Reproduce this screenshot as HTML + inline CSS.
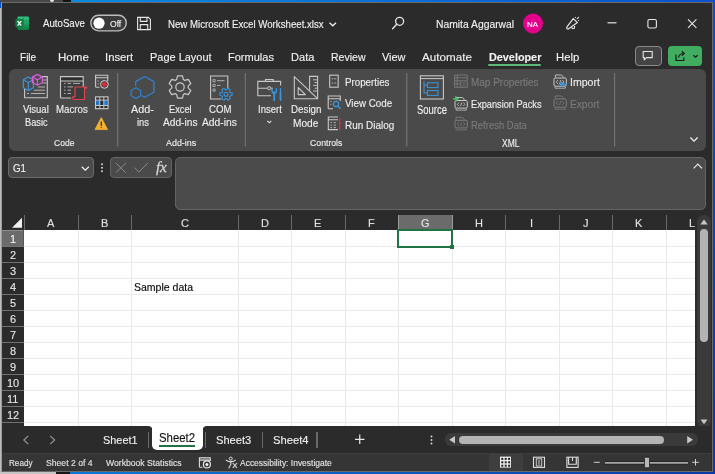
<!DOCTYPE html><html><head><meta charset="utf-8"><style>
html,body{margin:0;padding:0;width:715px;height:474px;overflow:hidden;background:#0a6fd6}
#w{position:relative;width:715px;height:474px;overflow:hidden;font-family:"Liberation Sans",sans-serif}
.t{position:absolute;white-space:nowrap;line-height:1;will-change:transform}
.b{position:absolute;box-sizing:border-box}
svg{position:absolute;overflow:visible}
</style></head><body><div id="w">
<div class="b" style="left:0px;top:0px;width:715px;height:474px;background:linear-gradient(to bottom,#0a50cc,#0a3aa6);"></div>
<div class="b" style="left:0px;top:0px;width:715px;height:2px;background:linear-gradient(to right,#0b8ae0 10%,#0a52cc);"></div>
<div class="b" style="left:0px;top:472px;width:715px;height:2px;background:linear-gradient(to right,#0a78d8 10%,#0a3aa6);"></div>
<div class="b" style="left:0px;top:0px;width:63px;height:2px;background:#474747;"></div>
<div class="b" style="left:63px;top:0px;width:8px;height:2px;background:#141414;"></div>
<div class="b" style="left:50px;top:0px;width:3.5px;height:1.6px;background:#e8e8e8;border-radius:0 0 2px 2px"></div>
<div class="b" style="left:0px;top:8px;width:1px;height:466px;background:#bcbcbc;"></div>
<div class="b" style="left:0px;top:472px;width:56px;height:2px;background:#c4c4c4;"></div>
<div class="b" style="left:56px;top:472px;width:14px;height:2px;background:#161616;"></div>
<div class="b" style="left:1px;top:2px;width:712px;height:470px;background:#2b2b2b;border:1px solid #6a6a6a;border-left-color:#9c9c9c"></div>
<div class="b" style="left:9px;top:69px;width:697px;height:82px;background:#4a4a4a;border-radius:6px"></div>
<div class="b" style="left:488px;top:64px;width:53px;height:2px;background:#5cb97a;border-radius:1px"></div>
<div class="b" style="left:635px;top:46px;width:27px;height:20px;background:#444444;border:1px solid #8a8a8a;border-radius:4px"></div>
<div class="b" style="left:668px;top:46px;width:34px;height:20px;background:#40ad60;border-radius:4px"></div>
<div class="b" style="left:8px;top:157px;width:86px;height:21px;background:#4a4a4a;border:1px solid #6b6b6b;border-radius:4px"></div>
<div class="b" style="left:110px;top:157px;width:62px;height:21px;background:#4a4a4a;border:1px solid #646464;border-radius:4px"></div>
<div class="b" style="left:175px;top:157px;width:531px;height:53px;background:#4b4b4b;border:1px solid #646464;border-radius:5px"></div>
<div class="b" style="left:24px;top:230px;width:671px;height:196px;background:#ffffff;"></div>
<div class="b" style="left:78px;top:230px;width:1px;height:196px;background:#e9e9e9;"></div>
<div class="b" style="left:131px;top:230px;width:1px;height:196px;background:#e9e9e9;"></div>
<div class="b" style="left:238px;top:230px;width:1px;height:196px;background:#e9e9e9;"></div>
<div class="b" style="left:291px;top:230px;width:1px;height:196px;background:#e9e9e9;"></div>
<div class="b" style="left:345px;top:230px;width:1px;height:196px;background:#e9e9e9;"></div>
<div class="b" style="left:398px;top:230px;width:1px;height:196px;background:#e9e9e9;"></div>
<div class="b" style="left:452px;top:230px;width:1px;height:196px;background:#e9e9e9;"></div>
<div class="b" style="left:505px;top:230px;width:1px;height:196px;background:#e9e9e9;"></div>
<div class="b" style="left:559px;top:230px;width:1px;height:196px;background:#e9e9e9;"></div>
<div class="b" style="left:612px;top:230px;width:1px;height:196px;background:#e9e9e9;"></div>
<div class="b" style="left:666px;top:230px;width:1px;height:196px;background:#e9e9e9;"></div>
<div class="b" style="left:24px;top:246px;width:671px;height:1px;background:#e9e9e9;"></div>
<div class="b" style="left:24px;top:262px;width:671px;height:1px;background:#e9e9e9;"></div>
<div class="b" style="left:24px;top:278px;width:671px;height:1px;background:#e9e9e9;"></div>
<div class="b" style="left:24px;top:294px;width:671px;height:1px;background:#e9e9e9;"></div>
<div class="b" style="left:24px;top:310px;width:671px;height:1px;background:#e9e9e9;"></div>
<div class="b" style="left:24px;top:326px;width:671px;height:1px;background:#e9e9e9;"></div>
<div class="b" style="left:24px;top:342px;width:671px;height:1px;background:#e9e9e9;"></div>
<div class="b" style="left:24px;top:358px;width:671px;height:1px;background:#e9e9e9;"></div>
<div class="b" style="left:24px;top:374px;width:671px;height:1px;background:#e9e9e9;"></div>
<div class="b" style="left:24px;top:390px;width:671px;height:1px;background:#e9e9e9;"></div>
<div class="b" style="left:24px;top:406px;width:671px;height:1px;background:#e9e9e9;"></div>
<div class="b" style="left:24px;top:422px;width:671px;height:1px;background:#e9e9e9;"></div>
<div class="b" style="left:398px;top:215px;width:54px;height:15px;background:#6b6b6b;"></div>
<div class="b" style="left:24px;top:215px;width:1px;height:15px;background:#6a6a6a;"></div>
<div class="b" style="left:78px;top:215px;width:1px;height:15px;background:#6a6a6a;"></div>
<div class="b" style="left:131px;top:215px;width:1px;height:15px;background:#6a6a6a;"></div>
<div class="b" style="left:238px;top:215px;width:1px;height:15px;background:#6a6a6a;"></div>
<div class="b" style="left:291px;top:215px;width:1px;height:15px;background:#6a6a6a;"></div>
<div class="b" style="left:345px;top:215px;width:1px;height:15px;background:#6a6a6a;"></div>
<div class="b" style="left:398px;top:215px;width:1px;height:15px;background:#9a9a9a;"></div>
<div class="b" style="left:452px;top:215px;width:1px;height:15px;background:#9a9a9a;"></div>
<div class="b" style="left:505px;top:215px;width:1px;height:15px;background:#6a6a6a;"></div>
<div class="b" style="left:559px;top:215px;width:1px;height:15px;background:#6a6a6a;"></div>
<div class="b" style="left:612px;top:215px;width:1px;height:15px;background:#6a6a6a;"></div>
<div class="b" style="left:666px;top:215px;width:1px;height:15px;background:#6a6a6a;"></div>
<div class="b" style="left:2px;top:246px;width:22px;height:1.3px;background:#707070;"></div>
<div class="b" style="left:2px;top:262px;width:22px;height:1.3px;background:#707070;"></div>
<div class="b" style="left:2px;top:278px;width:22px;height:1.3px;background:#707070;"></div>
<div class="b" style="left:2px;top:294px;width:22px;height:1.3px;background:#707070;"></div>
<div class="b" style="left:2px;top:310px;width:22px;height:1.3px;background:#707070;"></div>
<div class="b" style="left:2px;top:326px;width:22px;height:1.3px;background:#707070;"></div>
<div class="b" style="left:2px;top:342px;width:22px;height:1.3px;background:#707070;"></div>
<div class="b" style="left:2px;top:358px;width:22px;height:1.3px;background:#707070;"></div>
<div class="b" style="left:2px;top:374px;width:22px;height:1.3px;background:#707070;"></div>
<div class="b" style="left:2px;top:390px;width:22px;height:1.3px;background:#707070;"></div>
<div class="b" style="left:2px;top:406px;width:22px;height:1.3px;background:#707070;"></div>
<div class="b" style="left:2px;top:422px;width:22px;height:1.3px;background:#707070;"></div>
<div class="b" style="left:2px;top:230px;width:21px;height:16px;background:#6b6b6b;"></div>
<div class="b" style="left:2px;top:230px;width:22px;height:1px;background:#8c8c8c;"></div>
<div class="b" style="left:23px;top:230px;width:1px;height:16px;background:#217346;"></div>
<div class="b" style="left:397px;top:229px;width:56px;height:19px;background:transparent;border:2px solid #217346"></div>
<div class="b" style="left:450px;top:245px;width:4px;height:4px;background:#217346;"></div>
<div class="b" style="left:697px;top:215px;width:14px;height:213px;background:#3a3a3a;border-radius:7px"></div>
<div class="b" style="left:700px;top:229px;width:8px;height:113px;background:#b4b4b4;border-radius:4px"></div>
<div class="b" style="left:140px;top:426px;width:72px;height:6px;background:#ffffff;"></div>
<div class="b" style="left:2px;top:426px;width:151px;height:27px;background:#2b2b2b;border-radius:0 5px 0 0"></div>
<div class="b" style="left:202px;top:426px;width:509px;height:27px;background:#2b2b2b;border-radius:5px 0 0 0"></div>
<div class="b" style="left:2px;top:448px;width:709px;height:5px;background:#2b2b2b;"></div>
<div class="b" style="left:2px;top:453px;width:709px;height:18px;background:#353535;border-top:1px solid #3c3c3c"></div>
<div class="b" style="left:152px;top:426px;width:51px;height:24px;background:#ffffff;border-radius:0 0 5px 5px"></div>
<div class="b" style="left:159px;top:445px;width:36px;height:2px;background:#217346;"></div>
<div class="b" style="left:147.5px;top:432px;width:1.5px;height:15.5px;background:#6a6a6a;"></div>
<div class="b" style="left:204.5px;top:432px;width:1.5px;height:15.5px;background:#6a6a6a;"></div>
<div class="b" style="left:261.5px;top:432px;width:1.5px;height:15.5px;background:#6a6a6a;"></div>
<div class="b" style="left:316px;top:432px;width:1.5px;height:15.5px;background:#6a6a6a;"></div>
<div class="b" style="left:445px;top:433px;width:253px;height:13px;background:#3a3a3a;border-radius:6px"></div>
<div class="b" style="left:459px;top:436px;width:205px;height:8px;background:#b4b4b4;border-radius:4px"></div>
<div class="b" style="left:489px;top:454px;width:34px;height:17px;background:#3e3e3e;"></div>
<span class="t" style="left:42.80px;top:19.00px;font-size:9.68px;color:#f2f2f2;font-weight:normal;transform:scaleY(1.049);transform-origin:0 8.00px;-webkit-text-stroke:0.12px #f2f2f2">AutoSave</span>
<span class="t" style="left:436.30px;top:20.00px;font-size:10.34px;color:#f2f2f2;font-weight:normal;transform:scaleY(1.087);transform-origin:0 8.00px;-webkit-text-stroke:0.12px #f2f2f2">Namita Aggarwal</span>
<span class="t" style="left:168.00px;top:20.00px;font-size:9.69px;color:#f2f2f2;font-weight:normal;transform:scaleY(1.133);transform-origin:0 8.00px;-webkit-text-stroke:0.12px #f2f2f2">New Microsoft Excel Worksheet.xlsx</span>
<span class="t" style="left:20.00px;top:53.00px;font-size:10.06px;color:#f2f2f2;font-weight:normal;transform:scaleY(1.145);transform-origin:0 8.00px;-webkit-text-stroke:0.12px #f2f2f2">File</span>
<span class="t" style="left:58.00px;top:52.00px;font-size:11.57px;color:#f2f2f2;font-weight:normal;transform:scaleY(0.996);transform-origin:0 9.00px;-webkit-text-stroke:0.12px #f2f2f2">Home</span>
<span class="t" style="left:105.00px;top:52.00px;font-size:11.28px;color:#f2f2f2;font-weight:normal;transform:scaleY(1.022);transform-origin:0 9.00px;-webkit-text-stroke:0.12px #f2f2f2">Insert</span>
<span class="t" style="left:149.60px;top:52.00px;font-size:10.98px;color:#f2f2f2;font-weight:normal;transform:scaleY(1.050);transform-origin:0 9.00px;-webkit-text-stroke:0.12px #f2f2f2">Page Layout</span>
<span class="t" style="left:228.40px;top:52.00px;font-size:11.03px;color:#f2f2f2;font-weight:normal;transform:scaleY(1.045);transform-origin:0 9.00px;-webkit-text-stroke:0.12px #f2f2f2">Formulas</span>
<span class="t" style="left:290.50px;top:52.00px;font-size:11.08px;color:#f2f2f2;font-weight:normal;transform:scaleY(1.039);transform-origin:0 9.00px;-webkit-text-stroke:0.12px #f2f2f2">Data</span>
<span class="t" style="left:330.70px;top:52.00px;font-size:10.52px;color:#f2f2f2;font-weight:normal;transform:scaleY(1.096);transform-origin:0 9.00px;-webkit-text-stroke:0.12px #f2f2f2">Review</span>
<span class="t" style="left:382.00px;top:52.00px;font-size:10.93px;color:#f2f2f2;font-weight:normal;transform:scaleY(1.055);transform-origin:0 9.00px;-webkit-text-stroke:0.12px #f2f2f2">View</span>
<span class="t" style="left:422.30px;top:51.00px;font-size:11.68px;color:#f2f2f2;font-weight:normal;transform:scaleY(0.986);transform-origin:0 10.00px;-webkit-text-stroke:0.12px #f2f2f2">Automate</span>
<span class="t" style="left:555.70px;top:52.00px;font-size:11.31px;color:#f2f2f2;font-weight:normal;transform:scaleY(1.019);transform-origin:0 9.00px;-webkit-text-stroke:0.12px #f2f2f2">Help</span>
<span class="t" style="left:488.60px;top:52.00px;font-size:10.83px;color:#f2f2f2;font-weight:bold;transform:scaleY(1.064);transform-origin:0 9.00px;-webkit-text-stroke:0.12px #f2f2f2">Developer</span>
<span class="t" style="left:22.80px;top:105.00px;font-size:9.52px;color:#eeeeee;font-weight:normal;transform:scaleY(1.153);transform-origin:0 8.00px;-webkit-text-stroke:0.12px #eeeeee">Visual</span>
<span class="t" style="left:25.00px;top:119.00px;font-size:9.22px;color:#eeeeee;font-weight:normal;transform:scaleY(1.190);transform-origin:0 7.00px;-webkit-text-stroke:0.12px #eeeeee">Basic</span>
<span class="t" style="left:56.40px;top:105.00px;font-size:9.73px;color:#eeeeee;font-weight:normal;transform:scaleY(1.128);transform-origin:0 8.00px;-webkit-text-stroke:0.12px #eeeeee">Macros</span>
<span class="t" style="left:54.30px;top:139.00px;font-size:8.54px;color:#eeeeee;font-weight:normal;transform:scaleY(1.077);transform-origin:0 7.00px;-webkit-text-stroke:0.12px #eeeeee">Code</span>
<span class="t" style="left:131.00px;top:104.00px;font-size:10.76px;color:#eeeeee;font-weight:normal;transform:scaleY(1.084);transform-origin:0 9.00px;-webkit-text-stroke:0.12px #eeeeee">Add-</span>
<span class="t" style="left:136.70px;top:119.00px;font-size:9.30px;color:#eeeeee;font-weight:normal;transform:scaleY(1.248);transform-origin:0 7.00px;-webkit-text-stroke:0.12px #eeeeee">ins</span>
<span class="t" style="left:168.80px;top:106.00px;font-size:9.27px;color:#eeeeee;font-weight:normal;transform:scaleY(1.229);transform-origin:0 7.00px;-webkit-text-stroke:0.12px #eeeeee">Excel</span>
<span class="t" style="left:163.00px;top:118.00px;font-size:10.18px;color:#eeeeee;font-weight:normal;transform:scaleY(1.146);transform-origin:0 8.00px;-webkit-text-stroke:0.12px #eeeeee">Add-ins</span>
<span class="t" style="left:208.50px;top:105.00px;font-size:9.66px;color:#eeeeee;font-weight:normal;transform:scaleY(1.179);transform-origin:0 8.00px;-webkit-text-stroke:0.12px #eeeeee">COM</span>
<span class="t" style="left:202.00px;top:118.00px;font-size:10.27px;color:#eeeeee;font-weight:normal;transform:scaleY(1.136);transform-origin:0 8.00px;-webkit-text-stroke:0.12px #eeeeee">Add-ins</span>
<span class="t" style="left:166.40px;top:139.00px;font-size:8.91px;color:#eeeeee;font-weight:normal;transform:scaleY(1.016);transform-origin:0 7.00px;-webkit-text-stroke:0.12px #eeeeee">Add-ins</span>
<span class="t" style="left:257.70px;top:105.00px;font-size:9.52px;color:#eeeeee;font-weight:normal;transform:scaleY(1.153);transform-origin:0 8.00px;-webkit-text-stroke:0.12px #eeeeee">Insert</span>
<span class="t" style="left:290.50px;top:105.00px;font-size:9.81px;color:#eeeeee;font-weight:normal;transform:scaleY(1.119);transform-origin:0 8.00px;-webkit-text-stroke:0.12px #eeeeee">Design</span>
<span class="t" style="left:293.00px;top:119.00px;font-size:10.16px;color:#eeeeee;font-weight:normal;transform:scaleY(1.148);transform-origin:0 8.00px;-webkit-text-stroke:0.12px #eeeeee">Mode</span>
<span class="t" style="left:344.70px;top:78.00px;font-size:9.76px;color:#eeeeee;font-weight:normal;transform:scaleY(1.139);transform-origin:0 8.00px;-webkit-text-stroke:0.12px #eeeeee">Properties</span>
<span class="t" style="left:344.70px;top:99.00px;font-size:9.81px;color:#eeeeee;font-weight:normal;transform:scaleY(1.118);transform-origin:0 8.00px;-webkit-text-stroke:0.12px #eeeeee">View Code</span>
<span class="t" style="left:344.70px;top:121.00px;font-size:9.96px;color:#eeeeee;font-weight:normal;transform:scaleY(1.157);transform-origin:0 8.00px;-webkit-text-stroke:0.12px #eeeeee">Run Dialog</span>
<span class="t" style="left:309.60px;top:139.00px;font-size:8.71px;color:#eeeeee;font-weight:normal;transform:scaleY(1.102);transform-origin:0 7.00px;-webkit-text-stroke:0.12px #eeeeee">Controls</span>
<span class="t" style="left:416.70px;top:106.00px;font-size:9.46px;color:#eeeeee;font-weight:normal;transform:scaleY(1.276);transform-origin:0 8.00px;-webkit-text-stroke:0.12px #eeeeee">Source</span>
<span class="t" style="left:471.00px;top:78.00px;font-size:9.97px;color:#7a7a7a;font-weight:normal;transform:scaleY(1.101);transform-origin:0 8.00px;-webkit-text-stroke:0.12px #7a7a7a">Map Properties</span>
<span class="t" style="left:471.00px;top:101.00px;font-size:9.20px;color:#eeeeee;font-weight:normal;transform:scaleY(1.192);transform-origin:0 7.00px;-webkit-text-stroke:0.12px #eeeeee">Expansion Packs</span>
<span class="t" style="left:471.00px;top:121.00px;font-size:9.49px;color:#7a7a7a;font-weight:normal;transform:scaleY(1.156);transform-origin:0 8.00px;-webkit-text-stroke:0.12px #7a7a7a">Refresh Data</span>
<span class="t" style="left:570.30px;top:77.00px;font-size:10.56px;color:#eeeeee;font-weight:normal;transform:scaleY(1.039);transform-origin:0 9.00px;-webkit-text-stroke:0.12px #eeeeee">Import</span>
<span class="t" style="left:570.00px;top:100.00px;font-size:10.17px;color:#7a7a7a;font-weight:normal;transform:scaleY(1.079);transform-origin:0 8.00px;-webkit-text-stroke:0.12px #7a7a7a">Export</span>
<span class="t" style="left:502.00px;top:140.00px;font-size:8.50px;color:#eeeeee;font-weight:normal;transform:scaleY(1.179);transform-origin:0 7.00px;-webkit-text-stroke:0.12px #eeeeee">XML</span>
<span class="t" style="left:13.30px;top:164.00px;font-size:9.77px;color:#f2f2f2;font-weight:normal;transform:scaleY(1.095);transform-origin:0 8.00px;-webkit-text-stroke:0.12px #f2f2f2">G1</span>
<span class="t" style="left:47.31px;top:218.00px;font-size:11.00px;color:#e8e8e8;font-weight:normal;transform:scaleY(0.998);transform-origin:0 9.00px;-webkit-text-stroke:0.1px #e8e8e8">A</span>
<span class="t" style="left:100.81px;top:218.00px;font-size:11.00px;color:#e8e8e8;font-weight:normal;transform:scaleY(0.998);transform-origin:0 9.00px;-webkit-text-stroke:0.1px #e8e8e8">B</span>
<span class="t" style="left:180.54px;top:218.00px;font-size:11.00px;color:#e8e8e8;font-weight:normal;transform:scaleY(0.998);transform-origin:0 9.00px;-webkit-text-stroke:0.1px #e8e8e8">C</span>
<span class="t" style="left:260.54px;top:218.00px;font-size:11.00px;color:#e8e8e8;font-weight:normal;transform:scaleY(0.998);transform-origin:0 9.00px;-webkit-text-stroke:0.1px #e8e8e8">D</span>
<span class="t" style="left:314.31px;top:218.00px;font-size:11.00px;color:#e8e8e8;font-weight:normal;transform:scaleY(0.998);transform-origin:0 9.00px;-webkit-text-stroke:0.1px #e8e8e8">E</span>
<span class="t" style="left:368.14px;top:218.00px;font-size:11.00px;color:#e8e8e8;font-weight:normal;transform:scaleY(0.998);transform-origin:0 9.00px;-webkit-text-stroke:0.1px #e8e8e8">F</span>
<span class="t" style="left:420.71px;top:218.00px;font-size:11.00px;color:#e8e8e8;font-weight:normal;transform:scaleY(0.998);transform-origin:0 9.00px;-webkit-text-stroke:0.1px #e8e8e8">G</span>
<span class="t" style="left:474.54px;top:218.00px;font-size:11.00px;color:#e8e8e8;font-weight:normal;transform:scaleY(0.998);transform-origin:0 9.00px;-webkit-text-stroke:0.1px #e8e8e8">H</span>
<span class="t" style="left:530.46px;top:218.00px;font-size:11.00px;color:#e8e8e8;font-weight:normal;transform:scaleY(0.998);transform-origin:0 9.00px;-webkit-text-stroke:0.1px #e8e8e8">I</span>
<span class="t" style="left:582.75px;top:218.00px;font-size:11.00px;color:#e8e8e8;font-weight:normal;transform:scaleY(0.998);transform-origin:0 9.00px;-webkit-text-stroke:0.1px #e8e8e8">J</span>
<span class="t" style="left:635.32px;top:218.00px;font-size:11.00px;color:#e8e8e8;font-weight:normal;transform:scaleY(0.998);transform-origin:0 9.00px;-webkit-text-stroke:0.1px #e8e8e8">K</span>
<span class="t" style="left:689.42px;top:218.00px;font-size:11.00px;color:#e8e8e8;font-weight:normal;transform:scaleY(0.998);transform-origin:0 9.00px;-webkit-text-stroke:0.1px #e8e8e8">L</span>
<span class="t" style="left:134.00px;top:282.00px;font-size:10.53px;color:#000;font-weight:normal;transform:scaleY(0.997);transform-origin:0 9.00px;-webkit-text-stroke:0.12px #000">Sample data</span>
<span class="t" style="left:102.80px;top:435.00px;font-size:10.91px;color:#f0f0f0;font-weight:normal;transform:scaleY(1.068);transform-origin:0 9.00px;-webkit-text-stroke:0.12px #f0f0f0">Sheet1</span>
<span class="t" style="left:158.60px;top:433.00px;font-size:11.39px;color:#111;font-weight:normal;transform:scaleY(1.060);transform-origin:0 9.00px;-webkit-text-stroke:0.12px #111">Sheet2</span>
<span class="t" style="left:216.00px;top:435.00px;font-size:11.10px;color:#f0f0f0;font-weight:normal;transform:scaleY(1.050);transform-origin:0 9.00px;-webkit-text-stroke:0.12px #f0f0f0">Sheet3</span>
<span class="t" style="left:273.00px;top:435.00px;font-size:11.20px;color:#f0f0f0;font-weight:normal;transform:scaleY(1.041);transform-origin:0 9.00px;-webkit-text-stroke:0.12px #f0f0f0">Sheet4</span>
<span class="t" style="left:8.80px;top:460.00px;font-size:8.13px;color:#e4e4e4;font-weight:normal;transform:scaleY(1.080);transform-origin:0 6.00px;-webkit-text-stroke:0.12px #e4e4e4">Ready</span>
<span class="t" style="left:46.00px;top:459.00px;font-size:8.63px;color:#e4e4e4;font-weight:normal;transform:scaleY(1.018);transform-origin:0 7.00px;-webkit-text-stroke:0.12px #e4e4e4">Sheet 2 of 4</span>
<span class="t" style="left:105.70px;top:459.00px;font-size:8.65px;color:#e4e4e4;font-weight:normal;transform:scaleY(1.015);transform-origin:0 7.00px;-webkit-text-stroke:0.12px #e4e4e4">Workbook Statistics</span>
<span class="t" style="left:240.40px;top:459.00px;font-size:8.48px;color:#e4e4e4;font-weight:normal;transform:scaleY(1.036);transform-origin:0 7.00px;-webkit-text-stroke:0.12px #e4e4e4">Accessibility: Investigate</span>
<svg width="715" height="474" viewBox="0 0 715 474" style="left:0;top:0"><defs><linearGradient id="xg" x1="0" y1="0" x2="0" y2="1"><stop offset="0" stop-color="#33c481"/><stop offset="1" stop-color="#107c41"/></linearGradient></defs>
<rect x="17.5" y="16.5" width="11.5" height="13.5" rx="1" fill="url(#xg)"/>
<path d="M21 20.8H29M21 25.3H29M23.3 16.5V30" stroke="#1b8a4f" stroke-width="0.6" fill="none"/>
<rect x="15.3" y="19" width="8.2" height="8.4" rx="1.4" fill="#117a40"/>
<path d="M17.6 21L21.3 25.6M21.3 21L17.6 25.6" stroke="#fff" stroke-width="1.25"/>
<rect x="90.8" y="15.3" width="35.5" height="15.6" rx="7.8" fill="#3a3a3a" stroke="#bdbdbd" stroke-width="1.4"/>
<circle cx="99" cy="23.2" r="5.6" fill="#fff"/>
<path d="M137.6 17.4H148.4L150.4 19.4V29.6H137.6Z" fill="none" stroke="#e6e6e6" stroke-width="1.1"/>
<path d="M140.3 17.4V21.4H147V17.4M140.3 29.6V24.6H147.7V29.6" fill="none" stroke="#e6e6e6" stroke-width="1.1"/>
<path d="M329.5 22.8L332.8 25.8L336 22.8" fill="none" stroke="#f0f0f0" stroke-width="1.3"/>
<circle cx="399.6" cy="21.3" r="4" fill="none" stroke="#e6e6e6" stroke-width="1.3"/>
<path d="M396.9 24.1L392.6 28.7" stroke="#e6e6e6" stroke-width="1.4" stroke-linecap="round"/>
<circle cx="533" cy="23.5" r="10" fill="#e3008c"/>
<path d="M573.3 18.6L577.4 22.6L568.4 28.9Q567.3 29.3 566.8 28.2Q566.5 27.5 567 26.9Z" fill="none" stroke="#e6e6e6" stroke-width="1.2" stroke-linejoin="round"/>
<path d="M571.6 27.3Q572.3 29.3 574.2 28.3Q574.8 27.6 574.5 25.8" fill="none" stroke="#e6e6e6" stroke-width="1.1"/>
<path d="M577.2 18.7L578.6 17.3" stroke="#e6e6e6" stroke-width="1.1" stroke-linecap="round"/><circle cx="575.4" cy="17.3" r="0.6" fill="#e6e6e6"/><circle cx="578.5" cy="20.6" r="0.6" fill="#e6e6e6"/>
<path d="M607.5 22.8H616.5" stroke="#e6e6e6" stroke-width="1.2"/>
<rect x="647.9" y="19.5" width="8.5" height="8.5" rx="1.6" fill="none" stroke="#e6e6e6" stroke-width="1.1"/>
<path d="M688 19.4L696.4 27.8M696.4 19.4L688 27.8" stroke="#e6e6e6" stroke-width="1.1"/>
<path d="M643.2 51.5H652.2V57.6H646.5L644.3 59.8V57.6H643.2Z" fill="none" stroke="#e6e6e6" stroke-width="1.1" stroke-linejoin="round"/>
<path d="M676 54.5V60.5H683.8V57.5" fill="none" stroke="#1a1a1a" stroke-width="1.2"/>
<path d="M678.5 57.5Q679.5 53.8 683 53.5M681.8 51.3L684.3 53.5L681.8 55.6" fill="none" stroke="#1a1a1a" stroke-width="1.2"/>
<path d="M693.4 55.2L695.5 57.2L697.6 55.2" fill="none" stroke="#1a1a1a" stroke-width="1.2"/><path d="M24.6 89V97.8H47.3V76.6H40.5" stroke="#c8c8c8" fill="none" stroke-width="1.1"/>
<path d="M42 80H47M42.5 83H46.8M38 87H45M34 90.2H45M27 93.5H29M31 93.5H45" stroke="#bdbdbd" stroke-width="0.9"/>
<path d="M28.3 77L33.4 79.8V87.7L28.3 90.5L23.3 87.7V79.8Z" fill="none" stroke="#3a96dd" stroke-width="1.2" stroke-linejoin="round"/>
<path d="M23.3 79.8L28.3 82.4L33.4 79.8M28.3 82.4V90.5" fill="none" stroke="#3a96dd" stroke-width="1.1"/>
<path d="M37.4 74.4L42.4 77.1V82.5L37.4 85.2L32.4 82.5V77.1Z" fill="none" stroke="#d65fd8" stroke-width="1.2" stroke-linejoin="round"/>
<path d="M32.4 77.1L37.4 79.8L42.4 77.1M37.4 79.8V85.2" fill="none" stroke="#d65fd8" stroke-width="1.1"/>
<rect x="60.5" y="76.6" width="22.7" height="21.4" fill="#3c3c3c"/><rect x="60.5" y="76.6" width="22.7" height="4.4" fill="#2e2e2e"/>
<path d="M60.5 98V76.6H83.2V88M60.5 81H83.2M71 98H60.5" stroke="#c8c8c8" fill="none" stroke-width="1.1"/>
<path d="M64 83.4H65.5M67.5 83.4H71M73 83.4H80M64 86.9H65.5M67.5 86.9H73M64 90.2H65.5M67.5 90.2H71M64 93.5H65.5M67.5 93.5H71" stroke="#bdbdbd" stroke-width="0.9"/>
<path d="M74.5 99.5H83.3Q85 99.5 84.5 97.8V88.2H86Q86.8 88.2 86.5 87H75V96.8H73Q72 97 72.4 98.4Q72.8 99.5 74.5 99.5Z" fill="#3c3c3c" stroke="#e0414f" stroke-width="1.2" stroke-linejoin="round"/>
<path d="M95.6 87.2V75.2H107.8V81M95.6 77.8H107.8M95.6 87.2H99.5" stroke="#c8c8c8" fill="none" stroke-width="1.1"/>
<circle cx="104.4" cy="84.4" r="3.9" fill="#4a4a4a" stroke="#d0d0d0" stroke-width="1"/>
<circle cx="104.4" cy="84.4" r="2.3" fill="#e0283a"/>
<path d="M97.5 81H99M97.5 84H99" stroke="#bdbdbd" stroke-width="0.8"/>
<rect x="95.6" y="96.9" width="12.4" height="11.8" fill="#2c2c2c" stroke="#d0d0d0" stroke-width="1.1"/>
<rect x="96.2" y="100.5" width="3.6" height="4.6" fill="#1e7ad6"/><rect x="103.8" y="100.5" width="3.6" height="4.6" fill="#1e7ad6"/>
<path d="M99.8 96.9V108.7M103.8 96.9V108.7M95.6 100.1H108M95.6 105.5H108" stroke="#c8c8c8" stroke-width="1"/>
<path d="M101.3 117.6L107.6 129.6H95L101.3 117.6Z" fill="#f2b130" stroke="#f2b130" stroke-width="0.8" stroke-linejoin="round"/>
<path d="M101.3 121.5V126" stroke="#3b2a10" stroke-width="1.2"/><circle cx="101.3" cy="127.6" r="0.7" fill="#3b2a10"/>
<path d="M117.7 73V146.5" stroke="#7a7a7a" stroke-width="1"/>
<path d="M245.3 73V146.5" stroke="#7a7a7a" stroke-width="1"/>
<path d="M406.8 73V146.5" stroke="#7a7a7a" stroke-width="1"/>
<path d="M614.6 73V146.5" stroke="#7a7a7a" stroke-width="1"/>
<path d="M144.8 76.5L153.9 81.6V92.2L144.8 97.2L141.8 95.6M135.7 86V81.6L144.8 76.5" fill="none" stroke="#2f80d2" stroke-width="1.3" stroke-linejoin="round"/>
<path d="M135.9 87.8L140.7 90.5V95.8L135.9 98.5L131.1 95.8V90.5Z" fill="none" stroke="#2f80d2" stroke-width="1.3" stroke-linejoin="round"/>
<path d="M176.66 79.51 L177.53 75.97 L182.47 75.97 L183.34 79.51 L184.81 80.36 L188.32 79.35 L190.78 83.62 L188.16 86.15 L188.16 87.85 L190.78 90.38 L188.32 94.65 L184.81 93.64 L183.34 94.49 L182.47 98.03 L177.53 98.03 L176.66 94.49 L175.19 93.64 L171.68 94.65 L169.22 90.38 L171.84 87.85 L171.84 86.15 L169.22 83.62 L171.68 79.35 L175.19 80.36Z" fill="none" stroke="#c8c8c8" stroke-width="1.2" stroke-linejoin="round"/>
<circle cx="180" cy="87" r="4.2" fill="none" stroke="#c8c8c8" stroke-width="1.2"/>
<path d="M221 99H210.6V76H227.8V88.5" stroke="#c8c8c8" fill="none" stroke-width="1.1"/>
<path d="M213 79.6H215.2V81.8H213ZM213 84.3H215.2V86.5H213ZM213 89H215.2V91.2H213Z" fill="none" stroke="#bdbdbd" stroke-width="0.8"/>
<path d="M217 80.7H224.5M217 85.4H220.5" stroke="#bdbdbd" stroke-width="0.9"/>
<path d="M229.93 92.45 L232.05 92.85 L232.05 95.55 L229.93 95.95 L229.48 96.72 L230.20 98.76 L227.85 100.12 L226.44 98.48 L225.56 98.48 L224.15 100.12 L221.80 98.76 L222.52 96.72 L222.07 95.95 L219.95 95.55 L219.95 92.85 L222.07 92.45 L222.52 91.68 L221.80 89.64 L224.15 88.28 L225.56 89.92 L226.44 89.92 L227.85 88.28 L230.20 89.64 L229.48 91.68Z" fill="#4a4a4a" stroke="#3a96dd" stroke-width="1.1" stroke-linejoin="round"/>
<circle cx="226" cy="94.2" r="2" fill="none" stroke="#3a96dd" stroke-width="1.1"/>
<path d="M271 95.8H257.8V81.4H280.6V85.5M265.5 81.4V79.5H273.2V81.4M257.8 88.2H267.6M270.8 88.2H273" stroke="#c8c8c8" fill="none" stroke-width="1.1"/>
<circle cx="269.2" cy="88.2" r="1.6" fill="none" stroke="#c8c8c8" stroke-width="1"/>
<path d="M274.2 92.3V100.2" stroke="#3a96dd" stroke-width="1.8" stroke-linecap="round"/>
<path d="M272 88.3V90.5Q272 93 274.2 93Q276.4 93 276.4 90.5V88.3" fill="none" stroke="#3a96dd" stroke-width="1.4"/>
<path d="M280.5 93V100" stroke="#3a96dd" stroke-width="1.8" stroke-linecap="round"/><path d="M280.5 88V92" stroke="#3a96dd" stroke-width="1.2"/>
<path d="M294.3 76.6V98.7H317.6ZM298.2 87.5V94.6H305.4Z" stroke="#c8c8c8" fill="none" stroke-width="1.1" stroke-linejoin="round"/>
<path d="M309.6 90.5V76.4H317.6V98.7" stroke="#c8c8c8" fill="none" stroke-width="1.1"/>
<path d="M313 79.8H317.3M314.5 82.6H317.3M313 85.4H317.3M314.5 88.2H317.3M313 91H317.3" stroke="#c8c8c8" stroke-width="0.9"/>
<rect x="329.7" y="75.2" width="8.5" height="12" stroke="#c8c8c8" fill="none" stroke-width="1.1"/>
<path d="M331.7 78.8H333.3M334.3 78.8H336.3M331.7 83H333.3M334.3 83H336.3" stroke="#bdbdbd" stroke-width="0.9"/>
<path d="M328.2 108.8V96H340.3V101M328.2 98.7H340.3M328.2 108.8H333" stroke="#c8c8c8" fill="none" stroke-width="1.1"/>
<path d="M330.2 101.5H331.5M330.2 104.3H331.5" stroke="#bdbdbd" stroke-width="0.8"/>
<circle cx="336" cy="104" r="2.6" fill="none" stroke="#3a96dd" stroke-width="1.2"/><path d="M337.9 106L340.5 108.9" stroke="#3a96dd" stroke-width="1.4"/>
<path d="M338 129.6H328.3V117H338M328.3 119.8H338" stroke="#c8c8c8" fill="none" stroke-width="1.1"/>
<path d="M330.3 122.6H332M333.5 122.6H336M330.3 125.2H332M333.5 125.2H336M330.3 127.6H332M333.5 127.6H336" stroke="#bdbdbd" stroke-width="0.8"/>
<path d="M339.7 118V130" stroke="#e0283a" stroke-width="1.4"/>
<rect x="420.4" y="75.8" width="23" height="23.2" stroke="#c8c8c8" fill="none" stroke-width="1.1"/>
<path d="M420.4 78.6H443.4" stroke="#c8c8c8" stroke-width="1"/>
<path d="M424 81V93H427.4M424 85.2H427.4" fill="none" stroke="#3a96dd" stroke-width="1"/>
<rect x="427.4" y="82.8" width="10.6" height="4.8" fill="none" stroke="#3a96dd" stroke-width="1"/><rect x="427.4" y="90.6" width="10.6" height="4.8" fill="none" stroke="#3a96dd" stroke-width="1"/>
<path d="M454.6 87.3V75H467.2V80.5M454.6 77.8H467.2M454.6 87.3H460.5M457.2 75V87.3M454.6 80.8H460.5M454.6 83.8H460.5" fill="none" stroke="#7c7c7c" stroke-width="0.9"/>
<rect x="460.8" y="80.8" width="6.4" height="6.5" fill="none" stroke="#7c7c7c" stroke-width="0.9"/><path d="M462.5 83H465.5M462.5 85.2H465.5" stroke="#7c7c7c" stroke-width="0.8"/>
<path d="M456 100.0V97.5H462.5L464.6 100.0" fill="none" stroke="#c8c8c8" stroke-width="0.9"/>
<rect x="455" y="100.5" width="12.3" height="7.6" rx="1.2" fill="none" stroke="#c8c8c8" stroke-width="1"/>
<path d="M459 102.5L457.3 104.3L459 106.1M463.3 102.5L465 104.3L463.3 106.1M461.8 102.5L460.5 106.1" fill="none" stroke="#c8c8c8" stroke-width="0.8"/>
<path d="M456 108.8V110.1H466.3V108.8" fill="none" stroke="#c8c8c8" stroke-width="0.8"/>
<path d="M455.9 96.2V101.6M453.2 98.9H458.6" stroke="#3fbf5f" stroke-width="1.6"/>
<path d="M456 119.8V117.3H462.5L464.6 119.8" fill="none" stroke="#7c7c7c" stroke-width="0.9"/>
<rect x="455" y="120.3" width="12.3" height="7.6" rx="1.2" fill="none" stroke="#7c7c7c" stroke-width="1"/>
<path d="M459 122.3L457.3 124.1L459 125.89999999999999M463.3 122.3L465 124.1L463.3 125.89999999999999M461.8 122.3L460.5 125.89999999999999" fill="none" stroke="#7c7c7c" stroke-width="0.8"/>
<path d="M456 128.6V129.9H466.3V128.6" fill="none" stroke="#7c7c7c" stroke-width="0.8"/>
<path d="M555.4 77.5V75H561.6L563.8 77.5" fill="none" stroke="#c8c8c8" stroke-width="0.9"/>
<rect x="554" y="78" width="12.3" height="8.2" rx="1.2" fill="none" stroke="#c8c8c8" stroke-width="1"/>
<path d="M558 80L556.3 82L558 84M562.3 80L564 82L562.3 84M560.8 80L559.5 84" fill="none" stroke="#c8c8c8" stroke-width="0.8"/>
<path d="M555 87V88.2H565.3V87" fill="none" stroke="#c8c8c8" stroke-width="0.8"/>
<path d="M567 84.3H560.2M562.5 82L560.2 84.3L562.5 86.6" fill="none" stroke="#3a96dd" stroke-width="1.4"/>
<path d="M555.4 98.5V96H561.6L563.8 98.5" fill="none" stroke="#7c7c7c" stroke-width="0.9"/>
<rect x="554" y="99" width="12.3" height="8.2" rx="1.2" fill="none" stroke="#7c7c7c" stroke-width="1"/>
<path d="M558 101L556.3 103L558 105M562.3 101L564 103L562.3 105M560.8 101L559.5 105" fill="none" stroke="#7c7c7c" stroke-width="0.8"/>
<path d="M555 108V109.2H565.3V108" fill="none" stroke="#7c7c7c" stroke-width="0.8"/>
<path d="M267.3 120.8L269.3 122.8L271.3 120.8" fill="none" stroke="#e0e0e0" stroke-width="1.1"/>
<path d="M690.4 137.5L694 141.1L697.6 137.5" fill="none" stroke="#f0f0f0" stroke-width="1.3"/><path d="M81.8 166.8L85.3 170.2L88.8 166.8" fill="none" stroke="#f0f0f0" stroke-width="1.3"/>
<circle cx="102" cy="164.3" r="0.95" fill="#d8d8d8"/>
<circle cx="102" cy="167.8" r="0.95" fill="#d8d8d8"/>
<circle cx="102" cy="171.3" r="0.95" fill="#d8d8d8"/>
<path d="M115.8 163L125.8 172.8M125.8 163L115.8 172.8" stroke="#8a8a8a" stroke-width="1"/>
<path d="M134.5 167.6L138.8 172.2L147.8 163" fill="none" stroke="#8a8a8a" stroke-width="1"/>
<path d="M693.6 168.4L697.8 164.2L702 168.4" fill="none" stroke="#e8e8e8" stroke-width="1.2"/>
<path d="M12 227.8L22 217.8V227.8Z" fill="#f0f0f0"/>
<path d="M700.3 224.5L704 219.6L707.7 224.5Z" fill="#c8c8c8"/>
<path d="M700.5 419.4L704 424.2L707.5 419.4Z" fill="#c8c8c8"/>
<path d="M455 436L449.2 439.7L455 443.4Z" fill="#c8c8c8"/>
<path d="M687.2 436L693 439.7L687.2 443.4Z" fill="#c8c8c8"/>
<path d="M28.3 435.8L23.8 440L28.3 444.2" fill="none" stroke="#9a9a9a" stroke-width="1.1"/>
<path d="M50.2 435.8L54.7 440L50.2 444.2" fill="none" stroke="#9a9a9a" stroke-width="1.1"/>
<path d="M355 439.3H364.5M359.75 434.6V444" stroke="#e8e8e8" stroke-width="1.2"/>
<circle cx="431.5" cy="436.5" r="0.95" fill="#d8d8d8"/>
<circle cx="431.5" cy="440" r="0.95" fill="#d8d8d8"/>
<circle cx="431.5" cy="443.5" r="0.95" fill="#d8d8d8"/>
<path d="M199.4 467.3V457.8H210.3V461M199.4 460.2H210.3M199.4 467.3H202.5" fill="none" stroke="#dcdcdc" stroke-width="1.1"/>
<rect x="200" y="458.3" width="9.8" height="1.6" fill="#9a9a9a"/>
<circle cx="206.9" cy="464.4" r="3.5" fill="#353535" stroke="#e4e4e4" stroke-width="1.2"/><circle cx="206.9" cy="464.4" r="1.5" fill="#f0f0f0"/>
<circle cx="230.8" cy="458.6" r="1.5" fill="none" stroke="#dcdcdc" stroke-width="1"/>
<path d="M226.2 460.2Q228 462 230.8 461.6Q233.6 462 235.4 460.2M230.8 461.6V464.5Q229.5 466.5 228.8 468M230.3 464.8" fill="none" stroke="#dcdcdc" stroke-width="1.1" stroke-linecap="round"/>
<path d="M232.8 463L237 467.8M237 463L232.8 467.8" stroke="#dcdcdc" stroke-width="1.1"/>
<rect x="500" y="456.6" width="11" height="11" fill="#ececec"/>
<rect x="501.3" y="457.9" width="2" height="2" fill="#1e1e1e"/>
<rect x="501.3" y="461.3" width="2" height="2" fill="#1e1e1e"/>
<rect x="501.3" y="464.7" width="2" height="2" fill="#1e1e1e"/>
<rect x="504.7" y="457.9" width="2" height="2" fill="#1e1e1e"/>
<rect x="504.7" y="461.3" width="2" height="2" fill="#1e1e1e"/>
<rect x="504.7" y="464.7" width="2" height="2" fill="#1e1e1e"/>
<rect x="508.1" y="457.9" width="2" height="2" fill="#1e1e1e"/>
<rect x="508.1" y="461.3" width="2" height="2" fill="#1e1e1e"/>
<rect x="508.1" y="464.7" width="2" height="2" fill="#1e1e1e"/>
<rect x="533.5" y="457.2" width="11" height="10.2" fill="none" stroke="#dedede" stroke-width="1.1"/>
<rect x="536.3" y="458.8" width="5.4" height="7.2" fill="none" stroke="#cfcfcf" stroke-width="1"/><rect x="538.2" y="460" width="1.6" height="4.8" fill="#9a9a9a"/>
<rect x="566.9" y="457.2" width="11.2" height="10.2" fill="none" stroke="#e0e0e0" stroke-width="1.1"/>
<path d="M568.6 457.5V464.2H576.3V457.5M572.5 457.5V461" fill="none" stroke="#e0e0e0" stroke-width="1.1"/>
<path d="M593.8 462.3H599.8" stroke="#cfcfcf" stroke-width="1"/>
<path d="M605 462.9H688" stroke="#1f1f1f" stroke-width="3.2"/><path d="M605 462.9H688" stroke="#a8a8a8" stroke-width="1.6"/>
<rect x="644.5" y="457.2" width="5" height="10.6" rx="1" fill="#b8b8b8" stroke="#202020" stroke-width="0.8"/>
<path d="M692.2 462.3H698.8M695.5 459V465.6" stroke="#cfcfcf" stroke-width="1"/></svg>
<span class="f" style="position:absolute;white-space:nowrap;line-height:1;left:156px;top:159px;font-size:15.3px;font-family:'Liberation Serif',serif;font-style:italic;color:#d4d4d4;letter-spacing:-0.3px;-webkit-text-stroke:0.3px #d4d4d4">fx</span>
<span class="t" style="left:109.50px;top:20.00px;font-size:8.56px;color:#f0f0f0;font-weight:normal;transform:scaleY(1.058);transform-origin:0 7.00px;-webkit-text-stroke:0.12px #f0f0f0">Off</span>
<span class="t" style="left:527.30px;top:21.00px;font-size:7.91px;color:#ffffff;font-weight:normal;transform:scaleY(1.023);transform-origin:0 6.00px;-webkit-text-stroke:0.12px #ffffff">NA</span>
<span class="t" style="left:9.72px;top:234.00px;font-size:11.00px;color:#f4f4f4;font-weight:normal;transform:scaleY(1.048);transform-origin:0 9.00px;-webkit-text-stroke:0.1px #f4f4f4">1</span>
<span class="t" style="left:9.72px;top:250.00px;font-size:11.00px;color:#e8e8e8;font-weight:normal;transform:scaleY(1.048);transform-origin:0 9.00px;-webkit-text-stroke:0.1px #e8e8e8">2</span>
<span class="t" style="left:9.72px;top:266.00px;font-size:11.00px;color:#e8e8e8;font-weight:normal;transform:scaleY(1.048);transform-origin:0 9.00px;-webkit-text-stroke:0.1px #e8e8e8">3</span>
<span class="t" style="left:9.72px;top:282.00px;font-size:11.00px;color:#e8e8e8;font-weight:normal;transform:scaleY(1.048);transform-origin:0 9.00px;-webkit-text-stroke:0.1px #e8e8e8">4</span>
<span class="t" style="left:9.72px;top:298.00px;font-size:11.00px;color:#e8e8e8;font-weight:normal;transform:scaleY(1.048);transform-origin:0 9.00px;-webkit-text-stroke:0.1px #e8e8e8">5</span>
<span class="t" style="left:9.72px;top:314.00px;font-size:11.00px;color:#e8e8e8;font-weight:normal;transform:scaleY(1.048);transform-origin:0 9.00px;-webkit-text-stroke:0.1px #e8e8e8">6</span>
<span class="t" style="left:9.72px;top:330.00px;font-size:11.00px;color:#e8e8e8;font-weight:normal;transform:scaleY(1.048);transform-origin:0 9.00px;-webkit-text-stroke:0.1px #e8e8e8">7</span>
<span class="t" style="left:9.72px;top:346.00px;font-size:11.00px;color:#e8e8e8;font-weight:normal;transform:scaleY(1.048);transform-origin:0 9.00px;-webkit-text-stroke:0.1px #e8e8e8">8</span>
<span class="t" style="left:9.72px;top:362.00px;font-size:11.00px;color:#e8e8e8;font-weight:normal;transform:scaleY(1.048);transform-origin:0 9.00px;-webkit-text-stroke:0.1px #e8e8e8">9</span>
<span class="t" style="left:6.70px;top:378.00px;font-size:11.00px;color:#e8e8e8;font-weight:normal;transform:scaleY(1.048);transform-origin:0 9.00px;-webkit-text-stroke:0.1px #e8e8e8">10</span>
<span class="t" style="left:7.08px;top:394.00px;font-size:11.00px;color:#e8e8e8;font-weight:normal;transform:scaleY(1.048);transform-origin:0 9.00px;-webkit-text-stroke:0.1px #e8e8e8">11</span>
<span class="t" style="left:6.70px;top:410.00px;font-size:11.00px;color:#e8e8e8;font-weight:normal;transform:scaleY(1.048);transform-origin:0 9.00px;-webkit-text-stroke:0.1px #e8e8e8">12</span>
</div></body></html>
